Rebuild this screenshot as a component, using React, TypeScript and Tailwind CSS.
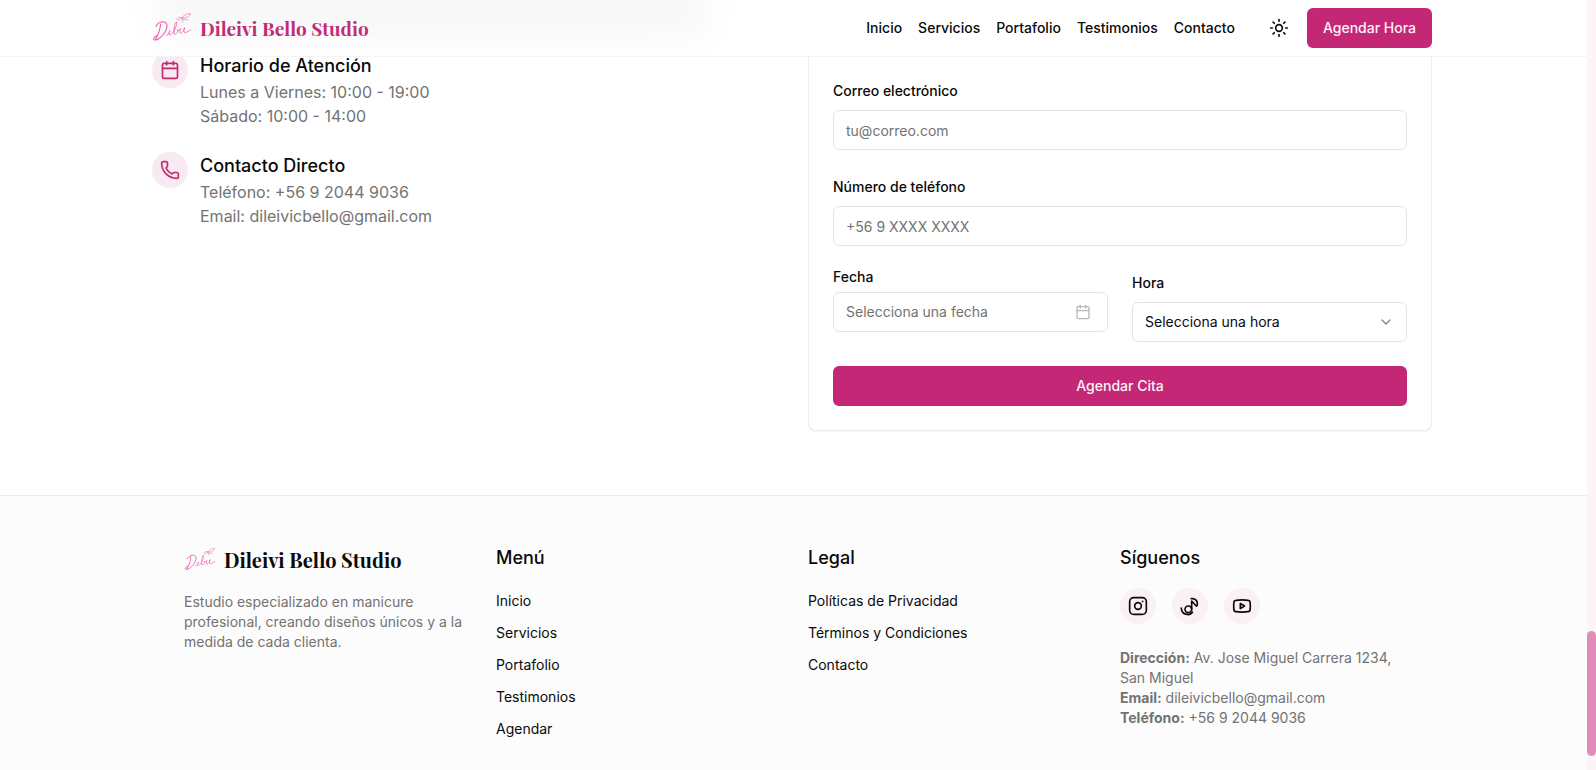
import React from "react";
import { Calendar, ChevronDown, Phone, Sun } from "lucide-react";

const navLinks = ["Inicio", "Servicios", "Portafolio", "Testimonios", "Contacto"];
const menuLinks = ["Inicio", "Servicios", "Portafolio", "Testimonios", "Agendar"];
const legalLinks = ["Políticas de Privacidad", "Términos y Condiciones", "Contacto"];

const fieldClass =
  "h-10 w-full rounded-md border border-[#e4e4e7] bg-white px-3 text-sm placeholder:text-[#737373]";

function Signature({ className }: { className: string }) {
  return (
    <svg viewBox="0 0 40 40" className={className} fill="none" stroke="#f05cb0" strokeLinecap="round" strokeLinejoin="round" aria-hidden="true">
      <path strokeWidth="1.1" d="M8.500 16C8.500 21 6.500 26 3.500 31.500M4 18.500C5 14.500 14.500 11 15 17.500C15.200 23.500 8 31.500 3 32C.5 32 1.500 28.500 5 27.500" />
      <path strokeWidth="0.8" d="M14.500 27.500C16.500 26.500 18 24.500 18 22.500C16.500 25 16.500 28.500 19 26.500C22.500 23.500 25.500 16.500 24.500 14C22.500 14.500 21.500 23 22 26C24.500 27 27 23.500 25.500 21.500C24.500 23 27 23.500 28.500 20.500C27.500 24 28 26.500 30 24.500C31.500 23 32.500 21 32.500 19.500C31.500 23 32 25.500 34 24.500C36 24 37 22.500 38.500 22" />
      <path strokeWidth="0.8" stroke="#f382c3" d="M30 14.500C31.500 13 31.500 11 29.500 10M29.500 10C31 7.500 35 5.500 38.500 5.500C38 8.500 34 10.500 29.500 10ZM29.500 10C27.500 8.500 25.500 9.500 25 11.500C26.500 12.500 28.500 12 29.500 10ZM29.500 10C31.500 11.500 33.500 11.500 35.500 12" />
    </svg>
  );
}

function InstagramIcon() {
  return (
    <svg viewBox="0 0 24 24" className="size-5" fill="none" stroke="currentColor" strokeWidth="2" strokeLinecap="round" aria-hidden="true">
      <rect x="2" y="2" width="20" height="20" rx="5" />
      <circle cx="12" cy="12" r="4" />
      <path d="M17.500 6.500h.01" />
    </svg>
  );
}

function TikTokIcon() {
  return (
    <svg viewBox="0 0 24 24" className="size-5" fill="none" stroke="currentColor" strokeWidth="2" strokeLinecap="round" strokeLinejoin="round" aria-hidden="true">
      <circle cx="10" cy="16" r="4" />
      <path d="M14 16V6l5.500 6" />
      <path d="M13.500 3.200C18 2.500 22 6 20.500 11.500" />
      <path d="M1.500 14.500C1.800 19 5 22.300 10.500 22.300 12.500 22 14 21 15 19.500" />
    </svg>
  );
}

function YouTubeIcon() {
  return (
    <svg viewBox="0 0 24 24" className="size-5" fill="none" stroke="currentColor" strokeWidth="2" strokeLinecap="round" strokeLinejoin="round" aria-hidden="true">
      <path d="M4.500 5.200c5-.6 10-.6 15 0 1.200.1 2 .8 2.200 2 .4 3.200.4 6.400 0 9.600-.2 1.200-1 1.900-2.200 2-5 .6-10 .6-15 0-1.200-.1-2-.8-2.200-2-.4-3.200-.4-6.400 0-9.600.2-1.200 1-1.900 2.200-2z" />
      <path d="m10 9 5 3-5 3z" />
    </svg>
  );
}

const socials = [
  { name: "Instagram", Icon: InstagramIcon },
  { name: "TikTok", Icon: TikTokIcon },
  { name: "YouTube", Icon: YouTubeIcon },
];

function Header() {
  return (
    <header className="absolute inset-x-0 top-0 z-10 overflow-hidden border-b border-[#f4f4f5] bg-white pr-[3px]">
      <div className="relative mx-auto flex h-14 max-w-[1280px] items-center justify-between">
        <div aria-hidden="true" className="absolute -top-6 left-0 h-16 w-[560px] rounded-full bg-[#f8f8f8] blur-lg" />
        <a href="#inicio" className="relative flex items-center gap-2">
          <Signature className="size-10" />
          <span className="font-['Playfair_Display','Liberation_Serif',serif] text-[19px] leading-7 font-bold text-[#be2d74]">Dileivi Bello Studio</span>
        </a>
        <div className="flex items-center gap-6">
          <nav className="flex gap-4 text-sm font-medium">
            {navLinks.map((l) => (
              <a key={l} href={`#${l.toLowerCase()}`}>{l}</a>
            ))}
          </nav>
          <div className="flex items-center gap-2">
            <button aria-label="Cambiar tema" className="flex size-10 items-center justify-center rounded-md">
              <Sun className="size-5" />
            </button>
            <button className="h-10 rounded-md bg-[#c42776] px-4 text-sm font-medium text-[#fdf2f8]">Agendar Hora</button>
          </div>
        </div>
      </div>
    </header>
  );
}

function InfoItem({ icon, title, lines }: { icon: React.ReactNode; title: string; lines: string[] }) {
  return (
    <div className="flex items-start gap-3">
      <div className="rounded-full bg-[#f9e9f1] p-2 text-[#be2d74]">{icon}</div>
      <div>
        <h3 className="text-lg font-medium">{title}</h3>
        {lines.map((l) => (
          <p key={l} className="text-[#737373]">{l}</p>
        ))}
      </div>
    </div>
  );
}

function Field({ id, label, children }: { id: string; label: string; children: React.ReactNode }) {
  return (
    <div className="flex flex-col gap-2">
      <div>
        <label htmlFor={id} className="text-sm leading-none font-medium">{label}</label>
      </div>
      {children}
    </div>
  );
}

function BookingForm() {
  return (
    <form className="flex flex-col gap-6 rounded-b-lg border border-t-0 border-[#ececee] bg-white px-6 pt-[78px] pb-6 shadow-xs">
      <Field id="correo" label="Correo electrónico">
        <input id="correo" type="email" placeholder="tu@correo.com" className={fieldClass} />
      </Field>
      <Field id="telefono" label="Número de teléfono">
        <input id="telefono" type="tel" placeholder="+56 9 XXXX XXXX" className={fieldClass} />
      </Field>
      <div className="grid grid-cols-2 gap-6">
        <div className="flex flex-col gap-2">
          <label htmlFor="fecha" className="text-sm leading-none font-medium">Fecha</label>
          <button id="fecha" type="button" className="flex h-10 w-full items-center justify-between rounded-md border border-[#e4e4e7] pr-4 pl-3 text-sm text-[#737373]">
            Selecciona una fecha
            <Calendar className="size-4 opacity-50" />
          </button>
        </div>
        <Field id="hora" label="Hora">
          <div className="relative rounded-md border border-[#e4e4e7]">
            <select id="hora" className="block h-[38px] w-full appearance-none rounded-md bg-white px-3 text-sm">
              <option>Selecciona una hora</option>
            </select>
            <ChevronDown className="pointer-events-none absolute inset-y-0 right-3 my-auto size-4 opacity-50" />
          </div>
        </Field>
      </div>
      <button type="submit" className="h-10 rounded-md bg-[#c42776] text-sm font-medium text-[#fdf2f8]">Agendar Cita</button>
    </form>
  );
}

function LinkColumn({ title, links }: { title: string; links: string[] }) {
  return (
    <div>
      <h3 className="mb-4 text-lg font-medium">{title}</h3>
      <ul className="flex flex-col gap-2">
        {links.map((l) => (
          <li key={l}><a href="#seccion" className="text-sm">{l}</a></li>
        ))}
      </ul>
    </div>
  );
}

function Footer() {
  return (
    <footer className="flex-1 border-t border-[#ececee] bg-[#fcfcfc] pr-[3px]">
      <div className="mx-auto grid max-w-[1280px] grid-cols-4 gap-8 px-8 py-12">
        <div>
          <div className="mb-4 flex items-center gap-2">
            <Signature className="size-8" />
            <span className="font-['Playfair_Display','Liberation_Serif',serif] text-xl font-bold">Dileivi Bello Studio</span>
          </div>
          <p className="text-sm text-[#737373]">Estudio especializado en manicure profesional, creando diseños únicos y a la medida de cada clienta.</p>
        </div>
        <LinkColumn title="Menú" links={menuLinks} />
        <LinkColumn title="Legal" links={legalLinks} />
        <div>
          <h3 className="mb-4 text-lg font-medium">Síguenos</h3>
          <div className="mb-6 flex gap-4">
            {socials.map(({ name, Icon }) => (
              <a key={name} href="#redes" aria-label={name} className="rounded-full bg-[#faf0f5] p-2"><Icon /></a>
            ))}
          </div>
          <address className="text-sm text-[#737373] not-italic">
            <p><strong>Dirección:</strong> Av. Jose Miguel Carrera 1234, San Miguel</p>
            <p><strong>Email:</strong> dileivicbello@gmail.com</p>
            <p><strong>Teléfono:</strong> +56 9 2044 9036</p>
          </address>
        </div>
      </div>
    </footer>
  );
}

export default function App() {
  return (
    <div className="flex h-screen overflow-hidden bg-white font-['Inter',sans-serif] text-[#0a0a0a]">
      <div className="relative flex flex-1 flex-col">
        <Header />
        <main className="pr-[3px] pb-16">
          <div className="mx-auto grid max-w-[1280px] grid-cols-2 gap-8">
            <section className="flex flex-col gap-6 pt-[52px]">
              <InfoItem icon={<Calendar className="size-5" />} title="Horario de Atención" lines={["Lunes a Viernes: 10:00 - 19:00", "Sábado: 10:00 - 14:00"]} />
              <InfoItem icon={<Phone className="size-5" />} title="Contacto Directo" lines={["Teléfono: +56 9 2044 9036", "Email: dileivicbello@gmail.com"]} />
            </section>
            <BookingForm />
          </div>
        </main>
        <Footer />
      </div>
      <div aria-hidden="true" className="flex w-[9px] flex-col justify-end bg-[#fdf4f8] pb-3.5">
        <div className="h-[125px] rounded-full bg-[#e18db7]" />
      </div>
    </div>
  );
}
